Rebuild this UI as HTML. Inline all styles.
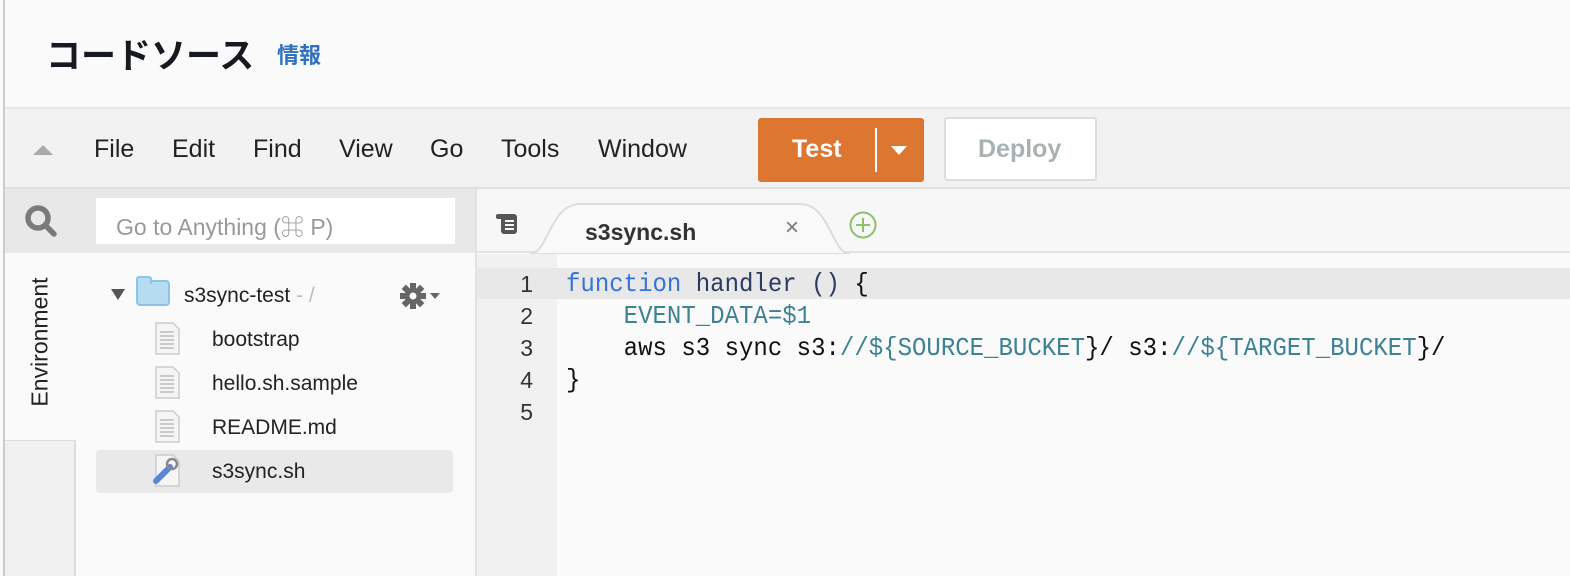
<!DOCTYPE html>
<html><head><meta charset="utf-8"><style>
*{margin:0;padding:0;box-sizing:border-box}
body{width:1570px;height:576px;overflow:hidden;background:#fafafa;font-family:"Liberation Sans","Noto Sans CJK JP",sans-serif;position:relative}
.a{position:absolute}
.menu span{position:absolute;top:135px;font-size:25px;color:#222}
.code div{position:absolute;left:566px;font-family:"Liberation Mono",monospace;font-size:26px;color:#111;white-space:pre;transform:scaleX(0.924);transform-origin:0 0}
.ln{position:absolute;left:475px;width:58px;text-align:right;font-size:23px;color:#333}
.f{position:absolute;font-size:21px;color:#222}
</style></head><body>
<div class="a" style="left:3px;top:0;width:2px;height:576px;background:#ccc"></div>
<div class="a" style="left:46px;top:28px;font-size:35px;font-weight:bold;color:#16191f;font-family:'Noto Sans CJK JP',sans-serif">コードソース</div>
<div class="a" style="left:277px;top:38px;font-size:22px;font-weight:bold;color:#2f72bb;font-family:'Noto Sans CJK JP',sans-serif">情報</div>
<div class="a" style="left:5px;top:107px;width:1565px;height:82px;background:#f2f2f2;border-top:2px solid #e6e6e6;border-bottom:2px solid #e0e0e0"></div>
<div class="a" style="left:33px;top:145px;width:0;height:0;border-left:10px solid transparent;border-right:10px solid transparent;border-bottom:10px solid #aaa"></div>
<div class="menu"><span style="left:94px">File</span><span style="left:172px">Edit</span><span style="left:253px">Find</span><span style="left:339px">View</span><span style="left:430px">Go</span><span style="left:501px">Tools</span><span style="left:598px">Window</span></div>
<div class="a" style="left:758px;top:118px;width:166px;height:64px;background:#dd7631;border-radius:3px"></div>
<div class="a" style="left:792px;top:135px;font-size:25px;font-weight:bold;color:#fff">Test</div>
<div class="a" style="left:875px;top:128px;width:2px;height:44px;background:#fff"></div>
<div class="a" style="left:891px;top:146px;border-left:8px solid transparent;border-right:8px solid transparent;border-top:9px solid #fff"></div>
<div class="a" style="left:944px;top:117px;width:153px;height:64px;background:#fff;border:2px solid #ddd;border-radius:3px"></div>
<div class="a" style="left:978px;top:135px;font-size:25px;font-weight:bold;color:#a9b2b2">Deploy</div>
<div class="a" style="left:5px;top:189px;width:470px;height:64px;background:#e8e8e8"></div>
<svg class="a" style="left:22px;top:203px" width="40" height="40"><circle cx="16" cy="15" r="10" fill="none" stroke="#7a7a7a" stroke-width="5.5"/><path d="M23 22l9 9" stroke="#7a7a7a" stroke-width="5.5" stroke-linecap="round"/></svg>
<div class="a" style="left:96px;top:198px;width:359px;height:46px;background:#fff"></div>
<div class="a" style="left:116px;top:208px;font-size:23px;color:#999">Go to Anything (⌘ P)</div>
<div class="a" style="left:5px;top:253px;width:70px;height:187px;background:#fafafa"></div>
<div class="a" style="left:5px;top:440px;width:71px;height:136px;background:#f1f1f1;border-top:1px solid #ddd;border-right:2px solid #ddd"></div>
<div class="a" style="left:40px;top:342px;transform:translate(-50%,-50%) rotate(-90deg);font-size:23px;color:#222;white-space:nowrap">Environment</div>
<div class="a" style="left:111px;top:289px;border-left:7px solid transparent;border-right:7px solid transparent;border-top:11px solid #555"></div>
<div class="a" style="left:136px;top:280px;width:34px;height:26px;background:#b6dcf2;border:2px solid #8fc3e4;border-radius:4px"></div>
<div class="a" style="left:136px;top:276px;width:16px;height:8px;background:#b6dcf2;border:2px solid #8fc3e4;border-bottom:none;border-radius:3px 3px 0 0"></div>
<div class="f" style="left:184px;top:284px">s3sync-test <span style="color:#bbb">- /</span></div>
<svg class="a" style="left:398px;top:282px" width="46" height="28"><g transform="translate(15,14)" fill="#666"><circle r="8"/><g><rect x="-3" y="-13" width="6" height="26"/><rect x="-3" y="-13" width="6" height="26" transform="rotate(45)"/><rect x="-3" y="-13" width="6" height="26" transform="rotate(90)"/><rect x="-3" y="-13" width="6" height="26" transform="rotate(135)"/></g><circle r="3.5" fill="#fafafa"/></g><path d="M32 11h10l-5 6z" fill="#666"/></svg>
<div class="a" style="left:96px;top:450px;width:357px;height:43px;background:#e9e9e9;border-radius:4px"></div>
<svg class="a" style="left:0;top:0" width="200" height="576">
<g fill="#f5f5f5" stroke="#ccc" stroke-width="1.5"><path d="M156 323h17l6 6v25h-23z"/><path d="M156 367h17l6 6v25h-23z"/><path d="M156 411h17l6 6v25h-23z"/><path d="M156 455h17l6 6v25h-23z"/></g>
<g stroke="#bbb" stroke-width="1.5"><path d="M160 332h14M160 336h14M160 340h14M160 344h14M160 348h14"/><path d="M160 376h14M160 380h14M160 384h14M160 388h14M160 392h14"/><path d="M160 420h14M160 424h14M160 428h14M160 432h14M160 436h14"/></g>
<path d="M156 481l14-14" stroke="#5b86d6" stroke-width="6" stroke-linecap="round"/><circle cx="172" cy="464" r="5" fill="none" stroke="#888" stroke-width="2.5"/>
</svg>
<div class="f" style="left:212px;top:328px">bootstrap</div>
<div class="f" style="left:212px;top:372px">hello.sh.sample</div>
<div class="f" style="left:212px;top:416px">README.md</div>
<div class="f" style="left:212px;top:460px">s3sync.sh</div>
<div class="a" style="left:475px;top:189px;width:2px;height:387px;background:#e2e2e2"></div>
<div class="a" style="left:477px;top:189px;width:1093px;height:64px;background:#f7f7f7;border-bottom:2px solid #e3e3e3"></div>
<svg class="a" style="left:495px;top:212px" width="30" height="26"><rect x="6" y="2" width="16" height="20" rx="3" fill="#555"/><rect x="1" y="2" width="10" height="5" rx="2" fill="#555"/><path d="M10 9h9M10 13h9M10 17h9" stroke="#f7f7f7" stroke-width="2"/></svg>
<svg class="a" style="left:530px;top:202px" width="320" height="52"><path d="M0 52C18 52 20 2 50 2H270C300 2 302 52 320 52Z" fill="#f9f9f9" stroke="#ddd" stroke-width="2"/></svg>
<div class="a" style="left:585px;top:219px;font-size:23px;font-weight:bold;color:#333">s3sync.sh</div>
<div class="a" style="left:785px;top:214px;font-size:24px;color:#777">×</div>
<svg class="a" style="left:848px;top:210px" width="30" height="30"><circle cx="15" cy="15" r="12.5" fill="none" stroke="#8cc06a" stroke-width="2"/><path d="M15 8v14M8 15h14" stroke="#8cc06a" stroke-width="2"/></svg>
<div class="a" style="left:477px;top:254px;width:80px;height:322px;background:#f1f1f1"></div>
<div class="a" style="left:477px;top:268px;width:1093px;height:31px;background:#e8e8e8"></div>
<div class="ln" style="top:271px">1</div><div class="ln" style="top:303px">2</div><div class="ln" style="top:335px">3</div><div class="ln" style="top:367px">4</div><div class="ln" style="top:399px">5</div>
<div class="code">
<div style="top:269px"><span style="color:#3474d6">function</span> <span style="color:#2d3b62">handler ()</span> {</div>
<div style="top:301px">    <span style="color:#3d8294">EVENT_DATA=$1</span></div>
<div style="top:333px">    aws s3 sync s3:<span style="color:#3d8294">//${SOURCE_BUCKET</span>}/ s3:<span style="color:#3d8294">//${TARGET_BUCKET</span>}/</div>
<div style="top:365px">}</div>
</div>
</body></html>
